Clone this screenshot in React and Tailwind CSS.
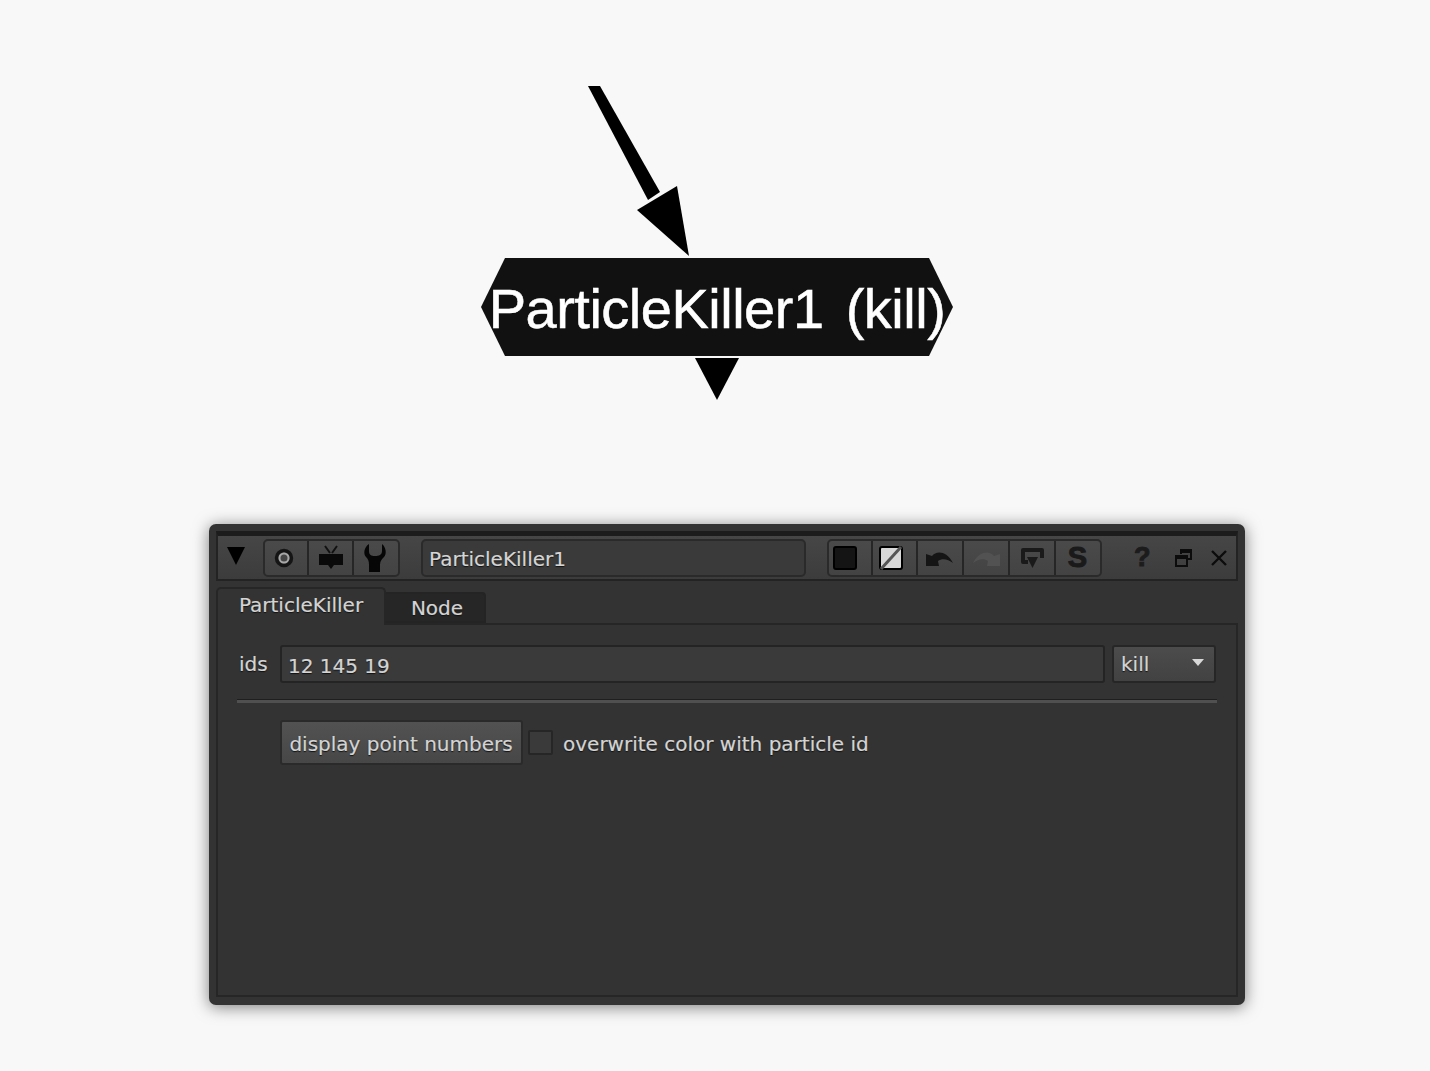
import React from 'react';

const font = "font-['DejaVu_Sans','Liberation_Sans',sans-serif]";
const textShadow = '[text-shadow:0_1px_1px_#111] [-webkit-text-stroke:0.2px_#d4d4d4]';

function ToolCell({ children, first, className = '' }) {
  return (
    <div className={`flex h-full shrink-0 items-center justify-center ${first ? '' : 'border-l-[2px] border-[#262626]'} ${className}`}>
      {children}
    </div>
  );
}

function ToolGroup({ children, width }) {
  return (
    <div className={`flex h-[38px] shrink-0 items-stretch overflow-hidden rounded-[5px] border-[2px] border-[#2a2a2a] bg-gradient-to-b from-[#4a4a4a] to-[#434343] ${width}`}>
      {children}
    </div>
  );
}

function NodeGraph() {
  return (
    <div className="relative h-[524px]">
      {/* incoming connection */}
      <svg className="absolute left-[580px] top-[80px]" width="120" height="180" viewBox="0 0 120 180">
        <path d="M8 6 L20 6 L80 112 L68 120 Z" fill="#000" />
        <path d="M57 130 L97 106 L109 176 Z" fill="#000" />
      </svg>

      {/* node body */}
      <div className="absolute left-[481px] top-[258px] flex h-[98px] w-[472px] items-center justify-center bg-[#111] pt-[4px] [clip-path:polygon(24px_0,448px_0,472px_49px,448px_98px,24px_98px,0_49px)]">
        <span className="whitespace-pre font-['Liberation_Sans',Arial,sans-serif] text-[56px] leading-none tracking-[-0.5px] text-white [word-spacing:-4px] [-webkit-text-stroke:0.5px_#fff]">
          ParticleKiller1  (kill)
        </span>
      </div>

      {/* output */}
      <svg className="absolute left-[694px] top-[358px]" width="46" height="42" viewBox="0 0 46 42">
        <path d="M1 0 L45 0 L23 42 Z" fill="#000" />
      </svg>
    </div>
  );
}

function TitleBar() {
  return (
    <div className="flex h-[50px] items-center border-[2px] border-t-[5px] border-[#232323] border-t-[#1c1c1c] bg-gradient-to-b from-[#464646] to-[#3c3c3c]">
      <svg className="ml-[8px] mt-[-4px] shrink-0" width="20" height="18" viewBox="0 0 20 18">
        <path d="M1 0 L19 0 L10 18 Z" fill="#000" />
      </svg>

      <div className="ml-[17px]">
        <ToolGroup width="w-[137px]">
          <ToolCell first className="w-[42px] pr-[4px]">
            <svg width="22" height="22" viewBox="0 0 22 22">
              <circle cx="11" cy="11" r="7.5" fill="none" stroke="#151515" strokeWidth="3.5" />
              <circle cx="11" cy="11" r="4.5" fill="none" stroke="#a8a8a8" strokeWidth="2" />
            </svg>
          </ToolCell>
          <ToolCell className="w-[45px]">
            <svg width="28" height="28" viewBox="0 0 28 28">
              <path d="M8 2 L13 9 M20 2 L15 9" stroke="#111" strokeWidth="2" fill="none" />
              <path d="M2 10 H26 V21 H17 L14 25 L11 21 H2 Z" fill="#0a0a0a" />
            </svg>
          </ToolCell>
          <ToolCell className="w-[46px] pr-[2px]">
            <svg width="26" height="30" viewBox="0 0 26 30">
              <path d="M7 1 C2 4 1 11 4 14 C6 16 7 18 7 22 V29 H18 V22 C18 18 20 16 22 14 C25 11 24 4 20 1 V8 C20 12 17 13 13 13 C9 13 7 12 7 8 Z" fill="#060606" />
            </svg>
          </ToolCell>
        </ToolGroup>
      </div>

      <div className={`ml-[21px] flex h-[38px] w-[385px] shrink-0 items-center rounded-[5px] border-[2px] border-[#2a2a2a] bg-[#3a3a3a] pl-[6px] pt-[3px] ${font} text-[20px] text-[#d6d6d6] ${textShadow}`}>
        ParticleKiller1
      </div>

      <div className="ml-[21px]">
        <ToolGroup width="w-[275px]">
          <ToolCell first className="w-[42px] pr-[10px]">
            <div className="h-[24px] w-[24px] rounded-[3px] border-[2px] border-black bg-[#141414]" />
          </ToolCell>
          <ToolCell className="w-[45px] pr-[7px]">
            <svg width="24" height="24" viewBox="0 0 24 24">
              <rect x="1" y="1" width="22" height="22" rx="2" fill="#d8d8d8" stroke="#000" strokeWidth="2" />
              <path d="M2 23 L22 1" stroke="#555" strokeWidth="3" />
            </svg>
          </ToolCell>
          <ToolCell className="w-[46px]">
            <svg className="mt-[3px]" width="28" height="16" viewBox="0 0 28 16">
              <path d="M0 3 L6 5 C10 0 20 -1 27 12 C22 8 16 7 12 10 L13 15 H0 Z" fill="#151515" />
            </svg>
          </ToolCell>
          <ToolCell className="w-[46px]">
            <svg className="mt-[3px]" width="28" height="16" viewBox="0 0 28 16">
              <path d="M28 3 L22 5 C18 0 8 -1 1 12 C6 8 12 7 16 10 L15 15 H28 Z" fill="#525252" />
            </svg>
          </ToolCell>
          <ToolCell className="w-[46px]">
            <svg width="24" height="22" viewBox="0 0 24 22">
              <path d="M22 11 V3 H3 V15 H8" fill="none" stroke="#1a1a1a" strokeWidth="4" strokeLinejoin="round" />
              <path d="M7 10 H18 L12.5 21 Z" fill="#1a1a1a" />
            </svg>
          </ToolCell>
          <ToolCell className="w-[45px]">
            <span className="font-['Liberation_Sans',sans-serif] text-[29px] font-bold leading-none text-[#1a1a1a] [-webkit-text-stroke:1px_#1a1a1a]">S</span>
          </ToolCell>
        </ToolGroup>
      </div>

      <span className="ml-[32px] font-['Liberation_Sans',sans-serif] text-[27px] font-bold leading-none text-[#1c1c1c] [-webkit-text-stroke:1px_#1c1c1c]">?</span>

      <svg className="ml-[24px] shrink-0" width="17" height="18" viewBox="0 0 17 18">
        <path d="M6 5 V1 H16 V10 H12" fill="none" stroke="#0c0c0c" strokeWidth="2" />
        <path d="M6 3 H16" stroke="#0c0c0c" strokeWidth="2" />
        <rect x="1" y="7" width="11" height="10" fill="none" stroke="#0c0c0c" strokeWidth="2" />
        <path d="M1 9 H12" stroke="#0c0c0c" strokeWidth="2" />
      </svg>

      <svg className="ml-[19px] shrink-0" width="16" height="16" viewBox="0 0 16 16">
        <path d="M1 1 L15 15 M15 1 L1 15" stroke="#0c0c0c" strokeWidth="2.4" />
      </svg>
    </div>
  );
}

function Tabs() {
  return (
    <div className={`relative z-10 mt-[6px] flex h-[38px] items-end ${font} ${textShadow}`}>
      <div className="flex h-[38px] w-[170px] items-start justify-center rounded-t-[5px] border-[2px] border-b-0 border-[#262626] bg-[#333] pt-[1px] text-[20px] text-[#d4d4d4]">
        ParticleKiller
      </div>
      <div className="mb-[2px] flex h-[31px] w-[100px] items-center justify-center rounded-tr-[4px] border-[2px] border-l-0 border-[#242424] bg-[#262626] pl-[4px] text-[20px] text-[#d4d4d4]">
        Node
      </div>
    </div>
  );
}

function KnobPanel() {
  return (
    <div className={`mt-[-2px] flex h-[374px] flex-col border-[2px] border-[#262626] bg-[#333] pl-[19px] pr-[19px] pt-[20px] ${font} text-[20px] text-[#d4d4d4] ${textShadow}`}>
      <div className="mr-[1px] flex h-[38px] items-center">
        <span className="w-[43px] pl-[2px]">ids</span>
        <div className="flex h-[38px] flex-1 items-center rounded-[3px] border-[2px] border-[#242424] bg-[#3a3a3a] pl-[6px] pt-[3px]">
          12 145 19
        </div>
        <div className="ml-[7px] flex h-[38px] w-[104px] items-center justify-between rounded-[3px] border-[2px] border-[#262626] bg-gradient-to-b from-[#4c4c4c] to-[#424242] pl-[7px] pr-[10px]">
          <span>kill</span>
          <svg className="mb-[3px]" width="12" height="7" viewBox="0 0 12 7">
            <path d="M0 0 H12 L6 7 Z" fill="#d8d8d8" />
          </svg>
        </div>
      </div>

      <div className="mt-[16px] h-[4px] border-t-[1px] border-[#1f1f1f] bg-[#505050]" />

      <div className="ml-[43px] mt-[17px] flex items-center">
        <div className="flex h-[45px] w-[243px] items-center justify-center rounded-[3px] border-[2px] border-[#2a2a2a] bg-gradient-to-b from-[#525252] to-[#474747] pr-[1px] pt-[2px]">
          display point numbers
        </div>
        <div className="ml-[5px] h-[25px] w-[25px] rounded-[2px] border-[2px] border-[#262626] bg-[#3a3a3a]" />
        <span className="ml-[10px] pt-[2px]">overwrite color with particle id</span>
      </div>
    </div>
  );
}

export default function App() {
  return (
    <div className="h-[1071px] overflow-hidden bg-[#f8f8f8]">
      <NodeGraph />
      <div className="ml-[209px] h-[481px] w-[1036px] rounded-[7px] bg-[#333] px-[7px] pt-[7px] shadow-[0_2px_16px_rgba(0,0,0,0.5)]">
        <TitleBar />
        <Tabs />
        <KnobPanel />
      </div>
    </div>
  );
}
